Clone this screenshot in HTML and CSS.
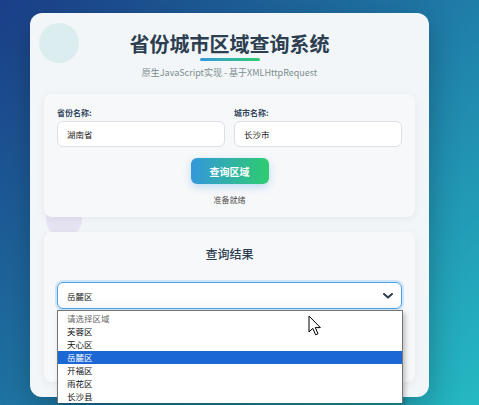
FILE: index.html
```html
<!DOCTYPE html>
<html lang="zh-CN">
<head>
    <meta charset="UTF-8">
    <meta name="viewport" content="width=device-width, initial-scale=1.0">
    <title>省份城市区域查询系统</title>
    <link rel="stylesheet" href="styles.css">
</head>
<body>

<div class="container">
    <!-- decorative bubbles -->
    <span class="bubble bubble-teal"></span>
    <span class="bubble bubble-purple"></span>

    <header class="header">
        <h1 class="title">省份城市区域查询系统</h1>
        <div class="title-line"></div>
        <p class="subtitle">原生JavaScript实现 - 基于XMLHttpRequest</p>
    </header>

    <section class="panel query-panel">
        <div class="form-row">
            <div class="form-group">
                <label for="province">省份名称:</label>
                <input id="province" type="text" value="湖南省">
            </div>
            <div class="form-group">
                <label for="city">城市名称:</label>
                <input id="city" type="text" value="长沙市">
            </div>
        </div>
        <div class="actions">
            <button class="btn-query" type="button">查询区域</button>
        </div>
        <p class="status">准备就绪</p>
    </section>

    <section class="panel result-panel">
        <h2 class="result-title">查询结果</h2>
        <div class="select-wrap">
            <div class="select-box">
                <span class="select-text">岳麓区</span>
                <svg class="chevron" width="10" height="6" viewBox="0 0 10 6">
                    <polyline points="1,1 5,4.6 9,1" fill="none" stroke="#2f3b48" stroke-width="2" stroke-linecap="round" stroke-linejoin="round"/>
                </svg>
            </div>
            <ul class="select-list">
                <li class="placeholder">请选择区域</li>
                <li>芙蓉区</li>
                <li>天心区</li>
                <li class="selected">岳麓区</li>
                <li>开福区</li>
                <li>雨花区</li>
                <li>长沙县</li>
            </ul>
        </div>
    </section>
</div>

<svg class="cursor" width="14" height="22" viewBox="0 0 14 22">
    <path d="M1 1 L1 17 L4.8 13.4 L7.6 19.8 L10 18.8 L7.3 12.6 L12.4 12.6 Z" fill="#fff" stroke="#000" stroke-width="1" stroke-linejoin="round"/>
</svg>

</body>
</html>
```

FILE: styles.css
```css
/* --- Page --- */
html, body {
    height: 100%;
    overflow: hidden;
}

body {
    margin: 0;
    padding: 13px 0 0 30px;
    box-sizing: border-box;
    font-family: "Noto Sans CJK SC", "Noto Sans", sans-serif;
    background: linear-gradient(135deg, #1b3f88 0%, #1f78a6 50%, #25b9c3 100%);
    position: relative;
}

/* --- Main card --- */
.container {
    position: relative;
    width: 399px;
    box-sizing: border-box;
    padding: 19px 14px 15px;
    background-color: #f2f6f9;
    border-radius: 12px;
    box-shadow: 0 10px 30px rgba(0, 0, 0, 0.25);
}

.bubble {
    position: absolute;
    border-radius: 50%;
}

.bubble-teal {
    left: 9px;
    top: 10px;
    width: 40px;
    height: 40px;
    background-color: #dcedf0;
}

.bubble-purple {
    left: 16px;
    top: 188px;
    width: 36px;
    height: 36px;
    background-color: #e6e3f2;
}

/* --- Header --- */
.header {
    position: relative;
    text-align: center;
}

.title {
    margin: 0;
    font-size: 20px;
    line-height: 24px;
    font-weight: 700;
    color: #2c3e50;
}

.title-line {
    width: 60px;
    height: 3px;
    margin: 2px auto 0;
    border-radius: 2px;
    background: linear-gradient(90deg, #3498db, #2ecc71);
}

.subtitle {
    margin: 6px 0 0;
    font-size: 9px;
    line-height: 12px;
    color: #7f8c8d;
}

/* --- Panels --- */
.panel {
    position: relative;
    background-color: #f7f8fa;
    border-radius: 8px;
    box-shadow: 0 2px 10px rgba(0, 0, 0, 0.06);
    padding: 13px 13px 11px;
}

.query-panel {
    margin-top: 15px;
}

.form-row {
    display: grid;
    grid-template-columns: 1fr 1fr;
    gap: 9px;
}

.form-group label {
    display: block;
    font-size: 8px;
    line-height: 12px;
    font-weight: 700;
    color: #34495e;
    margin-bottom: 2px;
}

.form-group input {
    display: block;
    width: 100%;
    height: 26px;
    box-sizing: border-box;
    padding: 0 9px;
    font-family: inherit;
    font-size: 8.5px;
    color: #222;
    background-color: #fff;
    border: 1px solid #dde0e4;
    border-radius: 6px;
    outline: none;
}

.actions {
    display: flex;
    justify-content: center;
    margin-top: 11px;
}

.btn-query {
    width: 78px;
    height: 26px;
    border: none;
    border-radius: 6px;
    font-family: inherit;
    font-size: 10px;
    font-weight: 700;
    color: #fff;
    cursor: pointer;
    background: linear-gradient(90deg, #3498db, #2ecc71);
    box-shadow: 0 3px 8px rgba(52, 152, 219, 0.3);
}

.status {
    margin: 10px 0 0;
    text-align: center;
    font-size: 8px;
    line-height: 12px;
    color: #555;
}

/* --- Result --- */
.result-panel {
    margin-top: 15px;
    height: 150px;
    box-sizing: border-box;
}

.result-title {
    margin: 0;
    text-align: center;
    font-size: 12px;
    line-height: 17px;
    font-weight: 500;
    color: #2c3e50;
}

.select-wrap {
    position: relative;
    margin-top: 20px;
}

.select-box {
    display: flex;
    align-items: center;
    justify-content: space-between;
    height: 27px;
    box-sizing: border-box;
    padding: 0 8px 0 9px;
    background: linear-gradient(#fff 60%, #f6f6f6);
    border: 1.5px solid #4aa3e6;
    border-radius: 6px;
    box-shadow: 0 0 0 2px rgba(52, 152, 219, 0.2);
    font-size: 8.5px;
    color: #222;
}

.chevron {
    display: block;
}

/* --- Open dropdown list --- */
.select-list {
    position: absolute;
    top: 28px;
    left: 0;
    right: -1px;
    margin: 0;
    padding: 1px 0 0;
    list-style: none;
    background-color: #fff;
    border: 1px solid #767676;
    border-bottom: none;
    box-shadow: 2px 3px 5px rgba(0, 0, 0, 0.25);
    z-index: 2;
}

.select-list li {
    height: 13px;
    line-height: 13px;
    padding-left: 9px;
    font-size: 8.5px;
    color: #111;
}

.select-list li.placeholder {
    color: #666;
}

.select-list li.selected {
    background-color: #1b67d3;
    color: #fff;
}

.cursor {
    position: absolute;
    left: 308px;
    top: 315px;
    z-index: 5;
}
```
